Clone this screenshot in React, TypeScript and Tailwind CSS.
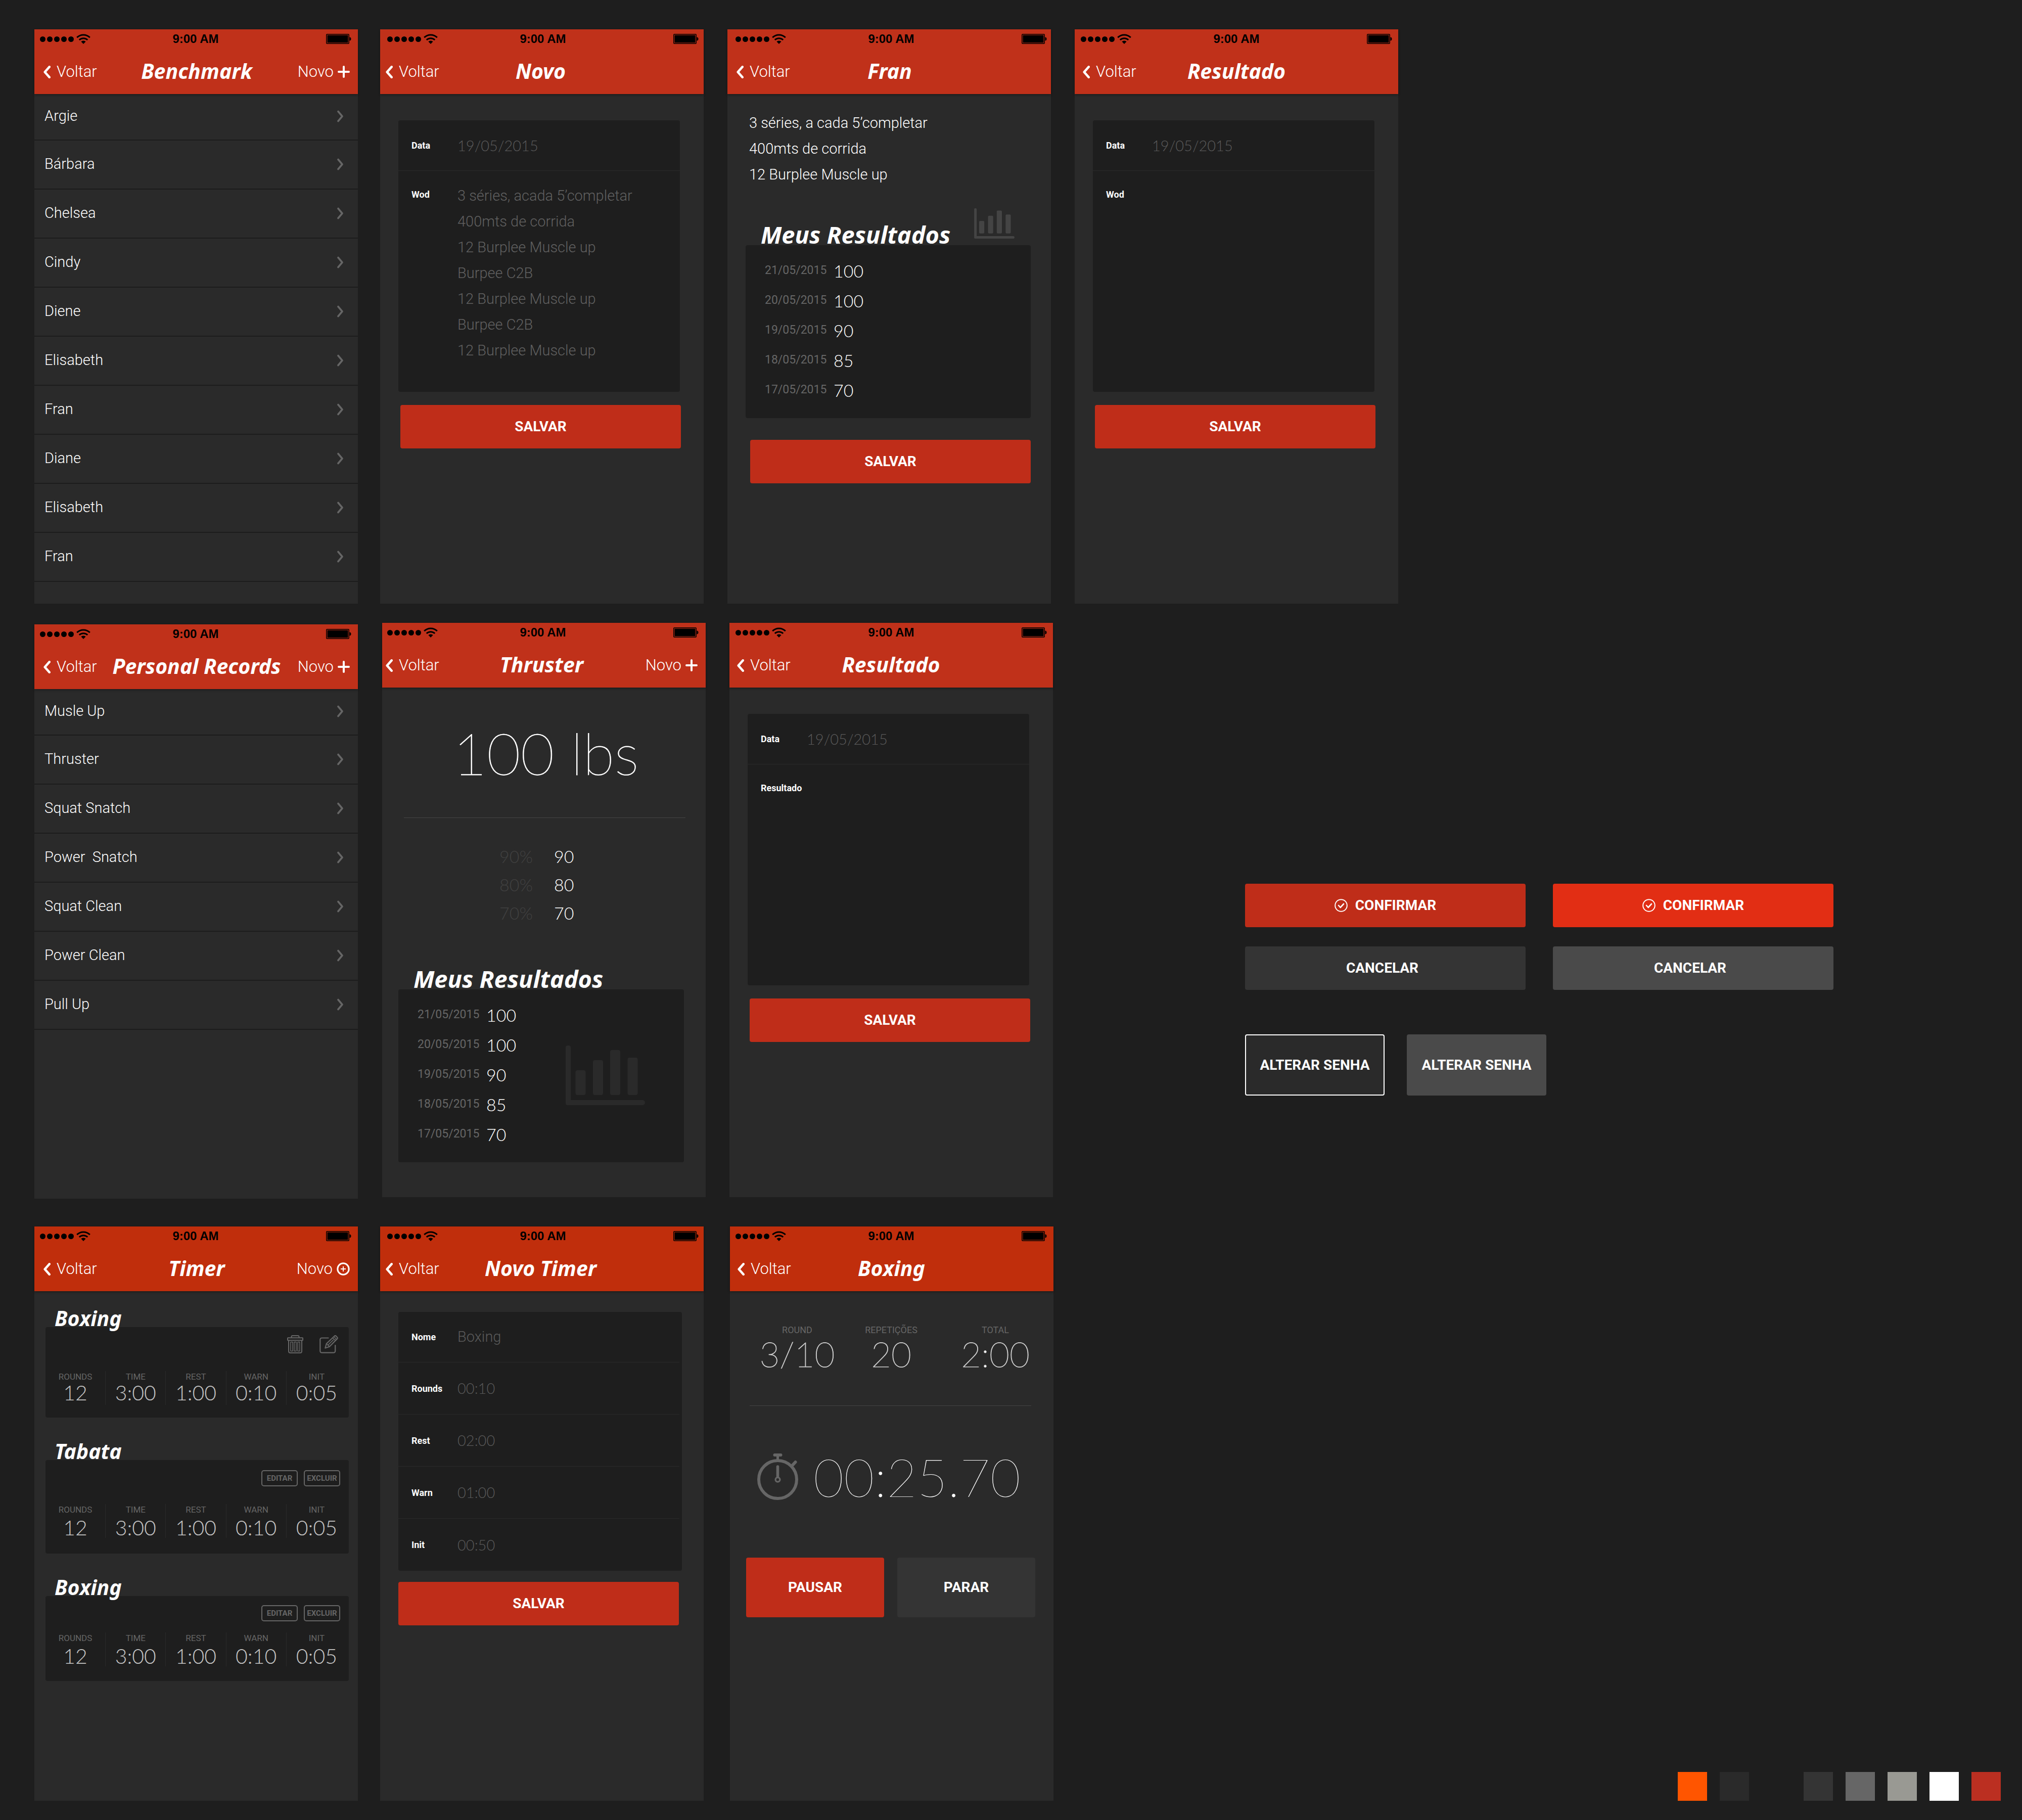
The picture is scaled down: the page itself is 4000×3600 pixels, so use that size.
import type { ReactNode } from "react";

/* ---------- icons ---------- */

function Wifi() {
  return (
    <svg className="h-5 w-7" viewBox="0 0 28 20" fill="none" stroke="#000" strokeWidth="3" aria-hidden="true">
      <path d="M1.2 7.2a18.4 18.4 0 0 1 25.6 0" />
      <path d="M5.8 12a11.8 11.8 0 0 1 16.4 0" />
      <path d="M14 20l-4.6-4.7a6.6 6.6 0 0 1 9.2 0z" fill="#000" stroke="none" />
    </svg>
  );
}

function Battery() {
  return (
    <svg className="h-5 w-[50px]" viewBox="0 0 50 20" aria-hidden="true">
      <rect x="0.75" y="0.75" width="44.5" height="18.5" rx="1.5" fill="none" stroke="#000" strokeWidth="1.5" />
      <rect x="2.5" y="2.5" width="41" height="15" rx="0.5" />
      <path d="M46.5 6.5c4 0 4 7 0 7z" />
    </svg>
  );
}

function BackChevron() {
  return (
    <svg className="h-[25px] w-[14px]" viewBox="0 0 14 25" fill="none" stroke="#fff" strokeWidth="4.6" strokeLinecap="round" strokeLinejoin="round" aria-hidden="true">
      <path d="M11.700 2.300L2.700 12.500l9 10.200" />
    </svg>
  );
}

function RowChevron() {
  return (
    <svg className="h-6 w-3" viewBox="0 0 12 24" fill="none" stroke="#666" strokeWidth="3.6" strokeLinecap="round" strokeLinejoin="round" aria-hidden="true">
      <path d="M2 2.500L10 12l-8 9.500" />
    </svg>
  );
}

function Plus() {
  return (
    <svg className="size-6" viewBox="0 0 24 24" stroke="#fff" strokeWidth="4" strokeLinecap="round" aria-hidden="true">
      <path d="M12 2v20M2 12h20" />
    </svg>
  );
}

function CirclePlus() {
  return (
    <svg className="size-[26px]" viewBox="0 0 26 26" fill="none" stroke="#fff" aria-hidden="true">
      <circle cx="13" cy="13" r="11.2" strokeWidth="3" />
      <path d="M13 8v10M8 13h10" strokeWidth="2" />
    </svg>
  );
}

function Check() {
  return (
    <svg className="size-[26px]" viewBox="0 0 26 26" fill="none" stroke="#fff" aria-hidden="true">
      <circle cx="13" cy="13" r="11.8" strokeWidth="2" />
      <path d="M8 13l3.6 4L18 10" strokeWidth="2.6" strokeLinecap="round" strokeLinejoin="round" />
    </svg>
  );
}

function Bars({ className }: { className: string }) {
  return (
    <svg className={`shrink-0 ${className}`} viewBox="0 0 157 118" fill="currentColor" aria-hidden="true">
      <path d="M0 4a4 4 0 0 1 4-4h2a4 4 0 0 1 4 4v104h142a5 5 0 0 1 0 10H4a4 4 0 0 1-4-4z" />
      <rect x="19.5" y="49" width="20" height="49" rx="4" />
      <rect x="54" y="29" width="20" height="69" rx="4" />
      <rect x="88" y="9" width="20" height="89" rx="4" />
      <rect x="122.5" y="24" width="20" height="74" rx="4" />
    </svg>
  );
}

function Trash() {
  return (
    <svg className="h-9 w-8" viewBox="0 0 32 36" fill="none" stroke="#666" strokeWidth="2" strokeLinejoin="round" aria-hidden="true">
      <path d="M8.500 5V3.200C8.500 2 9.400 1 10.700 1h10.600c1.300 0 2.200 1 2.200 2.200V5" />
      <rect x="1" y="5.200" width="30" height="5" rx="0.600" />
      <path d="M3 10.200v21.300c0 2 1.300 3.500 3.300 3.500h19.400c2 0 3.300-1.500 3.300-3.500V10.200" />
      <path d="M7 13.500h4v18H7zM14 13.500h4v18h-4zM21 13.500h4v18h-4z" strokeWidth="1.500" />
    </svg>
  );
}

function Edit() {
  return (
    <svg className="h-9 w-[37px]" viewBox="0 0 37 36" fill="none" stroke="#666" strokeWidth="2.200" strokeLinecap="round" strokeLinejoin="round" aria-hidden="true">
      <path d="M17.500 5.500H5C2.800 5.500 1.300 7 1.300 9v22c0 2.200 1.500 3.700 3.700 3.700h22.500c2.200 0 3.700-1.500 3.700-3.700V20" />
      <path d="M11.300 25.500l2.500-8.700L29.700 1.700c1-1 2.200-.9 3 0l2.400 2.500c.9.900.9 2 0 2.900L19.700 22.700z" />
      <path d="M13.800 16.800l5.900 5.900M26 5.300l5.800 5.400M28.500 3l5.500 5.300M16.800 19.700l10.500-10.300" strokeWidth="1.700" />
    </svg>
  );
}

function Stopwatch() {
  return (
    <svg className="h-[92px] w-[81px]" viewBox="0 0 81 92" fill="none" stroke="#666" strokeLinecap="round" aria-hidden="true">
      <circle cx="40.500" cy="51.500" r="37.500" strokeWidth="6" />
      <path d="M34.500 3h12M69.500 23.500l6-6.500" strokeWidth="6" />
      <path d="M40.500 4v9" strokeWidth="5" />
      <path d="M40.500 26v20" strokeWidth="5.600" />
      <circle cx="40.500" cy="51.700" r="4.400" strokeWidth="3.300" />
    </svg>
  );
}

/* ---------- shared parts ---------- */

type BoardProps = {
  title: string;
  bar: string;
  back: string;
  action?: ReactNode;
  tone?: string;
  className?: string;
  children: ReactNode;
};

function Board({ title, bar, back, action, tone = "bg-[#c0311a]", className = "", children }: BoardProps) {
  return (
    <section className={`min-h-[1136px] w-[16vw] min-w-[640px] shrink-0 bg-[#2a2a2a] ${className}`}>
      <header className={`flex h-32 flex-col shadow-[0_2px_4px_rgba(0,0,0,0.35)] ${tone}`}>
        <div className={`grid h-[38px] grid-cols-[1fr_auto_1fr] items-center ${bar}`}>
          <div className="flex items-center gap-[3px]">
            {[0, 1, 2, 3, 4].map((n) => (
              <span key={n} className="size-[11px] rounded-full bg-black" />
            ))}
            <span className="ml-0.5">
              <Wifi />
            </span>
          </div>
          <span className="font-['Liberation_Sans',sans-serif] text-[24px] leading-6 font-bold text-black">9:00 AM</span>
          <span className="justify-self-end">
            <Battery />
          </span>
        </div>
        <nav className={`grid grow grid-cols-[1fr_auto_1fr] items-center pt-0.5 pr-4 ${back}`}>
          <a href="#voltar" className="flex items-center gap-3 text-[31px] font-light">
            <BackChevron />
            Voltar
          </a>
          <h1 className="pb-1 font-['Noto_Sans',sans-serif] text-[41px] leading-none font-bold italic">{title}</h1>
          <div className="justify-self-end">{action}</div>
        </nav>
      </header>
      {children}
    </section>
  );
}

function NewLink({ circle = false }: { circle?: boolean }) {
  return (
    <a href="#novo" className="flex items-center gap-2 text-[31px] font-light">
      Novo
      {circle ? <CirclePlus /> : <Plus />}
    </a>
  );
}

function NameList({ names }: { names: string[] }) {
  return (
    <ul>
      {names.map((name, i) => (
        <li key={i} className="h-[97px] border-b-2 border-[#1c1c1c] first:h-[92px]">
          <a href={`#item-${i}`} className="flex h-full items-center justify-between pr-[29px] pb-0.5 pl-5 text-[29px] font-light whitespace-pre">
            {name}
            <RowChevron />
          </a>
        </li>
      ))}
    </ul>
  );
}

function SolidButton({ children, className }: { children: ReactNode; className: string }) {
  return (
    <button type="button" className={`flex items-center justify-center gap-[15px] rounded-[4px] text-[28px] leading-8 font-bold ${className}`}>
      {children}
    </button>
  );
}

function Field({ id, label, value, className = "h-[103px]", text = false }: { id: string; label: string; value: string; className?: string; text?: boolean }) {
  return (
    <div className={`flex items-center border-b border-[#2a2a2a] pl-[26px] last:border-b-0 ${className}`}>
      <label htmlFor={id} className="w-[91px] shrink-0 text-[18px] font-bold">
        {label}
      </label>
      <input
        id={id}
        defaultValue={value}
        className={`min-w-0 grow bg-transparent text-[29px] font-light text-[#5a5a5a] outline-none ${text ? "" : "font-['Lato',sans-serif]"}`}
      />
    </div>
  );
}

function NoteForm({ id, label, note = "" }: { id: string; label: string; note?: string }) {
  return (
    <form className="pt-[52px] pr-[47px] pl-9">
      <div className="rounded-[4px] bg-[#1e1e1e]">
        <Field id={`${id}-data`} label="Data" value="19/05/2015" className="h-[100px] last:border-b" />
        <div className="flex h-[437px] pl-[26px]">
          <label htmlFor={`${id}-note`} className="w-[91px] shrink-0 pt-[35px] text-[18px] leading-6 font-bold">
            {label}
          </label>
          <textarea
            id={`${id}-note`}
            defaultValue={note}
            className="min-w-0 grow resize-none bg-transparent pt-6 text-[29px] leading-[51px] font-light text-[#606060] outline-none"
          />
        </div>
      </div>
      <SolidButton className="mt-[26px] ml-1 h-[86px] w-[calc(100%-2px)] bg-[#bf2d19]">SALVAR</SolidButton>
    </form>
  );
}

const results = [
  ["21/05/2015", "100"],
  ["20/05/2015", "100"],
  ["19/05/2015", "90"],
  ["18/05/2015", "85"],
  ["17/05/2015", "70"],
];

function Results({ children }: { children?: ReactNode }) {
  return (
    <div className="flex min-h-[342px] items-start rounded-[4px] bg-[#1e1e1e] pt-[21px] pl-[38px]">
      <table>
        <tbody>
          {results.map(([date, value]) => (
            <tr key={date} className="h-[59px]">
              <th scope="row" className="w-[136px] text-left text-[23px] font-normal text-[#666]">
                {date}
              </th>
              <td className="font-['Lato',sans-serif] text-[34px] leading-none font-light">{value}</td>
            </tr>
          ))}
        </tbody>
      </table>
      {children}
    </div>
  );
}

const heading = "font-['Noto_Sans',sans-serif] text-[47px] leading-[48px] font-bold italic";

/* ---------- timer parts ---------- */

const timerStats = [
  ["ROUNDS", "12"],
  ["TIME", "3:00"],
  ["REST", "1:00"],
  ["WARN", "0:10"],
  ["INIT", "0:05"],
];

function TimerCard({ name, top, card, value, children }: { name: string; top: string; card: string; value: string; children: ReactNode }) {
  return (
    <article>
      <h2 className="-mb-0.5 pl-[18px] font-['Noto_Sans',sans-serif] text-[41px] leading-10 font-bold italic">{name}</h2>
      <div className={`rounded-[4px] bg-[#1e1e1e] ${card}`}>
        <div className={`flex items-start justify-end ${top}`}>{children}</div>
        <dl className="mr-1 grid grid-cols-5 text-center">
          {timerStats.map(([label, v]) => (
            <div key={label} className="h-[67px] border-r border-[#2a2a2a] last:border-r-0">
              <dt className="text-[17px] leading-[22px] text-[#666]">{label}</dt>
              <dd className={`font-['Lato',sans-serif] text-[41px] font-light text-[#c4c4c4] ${value}`}>{v}</dd>
            </div>
          ))}
        </dl>
      </div>
    </article>
  );
}

function TextActions() {
  return (
    <>
      {["EDITAR", "EXCLUIR"].map((label) => (
        <button key={label} type="button" className="h-8 w-[72px] rounded-[5px] border-2 border-[#666] text-[15px] leading-none font-bold text-[#666]">
          {label}
        </button>
      ))}
    </>
  );
}

/* ---------- page ---------- */

const benchmarks = ["Argie", "Bárbara", "Chelsea", "Cindy", "Diene", "Elisabeth", "Fran", "Diane", "Elisabeth", "Fran"];
const records = ["Musle Up", "Thruster", "Squat Snatch", "Power  Snatch", "Squat Clean", "Power Clean", "Pull Up"];
const wod = [
  "3 séries, acada 5’completar",
  "400mts de corrida",
  "12 Burplee Muscle up",
  "Burpee C2B",
  "12 Burplee Muscle up",
  "Burpee C2B",
  "12 Burplee Muscle up",
].join("\n");

const timerFields = [
  ["Nome", "Boxing"],
  ["Rounds", "00:10"],
  ["Rest", "02:00"],
  ["Warn", "01:00"],
  ["Init", "00:50"],
];

const percentages = [
  ["90%", "90"],
  ["80%", "80"],
  ["70%", "70"],
];

const swatches = ["bg-[#ff5500]", "bg-[#2a2a2a]", "bg-[#1e1e1e]", "bg-[#343434]", "bg-[#666666]", "bg-[#999993]", "bg-white", "bg-[#bb2f21]"];

const timerTone = "bg-[#c02e0c]";

export default function App() {
  return (
    <main className="flex min-h-screen flex-col bg-[#1e1e1e] pt-[58px] pb-[38px] pl-[68px] font-['Roboto',sans-serif] text-white">
      <div className="flex items-start">
        <Board title="Benchmark" bar="pl-[11px] pr-[13px]" back="pl-[18px]" action={<NewLink />}>
          <NameList names={benchmarks} />
        </Board>
        <Board title="Novo" bar="pl-[14px] pr-2.5" back="pl-[11px]" className="ml-11">
          <NoteForm id="novo" label="Wod" note={wod} />
        </Board>
        <Board title="Fran" bar="pl-4 pr-2" back="pl-[18px]" className="ml-[47px]">
          <div className="pt-8 pr-10 pl-9">
            <p className="pl-[7px] text-[29px] leading-[51px] font-light">
              3 séries, a cada 5’completar
              <br />
              400mts de corrida
              <br />
              12 Burplee Muscle up
            </p>
            <div className="mt-[41px] flex items-end justify-between pr-8 pl-[30px]">
              <h2 className={`-mb-[3px] ${heading}`}>Meus Resultados</h2>
              <Bars className="mb-[13px] h-[60px] w-20 text-[#444]" />
            </div>
            <Results />
            <SolidButton className="mt-[43px] ml-[9px] h-[86px] w-[calc(100%-9px)] bg-[#bf2d19]">SALVAR</SolidButton>
          </div>
        </Board>
        <Board title="Resultado" bar="pl-3 pr-3" back="pl-[16px]" className="ml-[47px]">
          <NoteForm id="resultado-wod" label="Wod" />
        </Board>
      </div>

      <div className="mt-[38px] flex items-start">
        <Board title="Personal Records" bar="pl-[11px] pr-[13px]" back="pl-[18px]" action={<NewLink />} className="mt-[3px]">
          <NameList names={records} />
        </Board>
        <Board title="Thruster" bar="pl-2.5 pr-[14px]" back="pl-[7px]" action={<NewLink />} className="ml-12">
          <p className="pt-[68px] pl-2 text-center font-['Lato',sans-serif] text-[115px] leading-[120px] font-thin [-webkit-text-stroke:1px_white]">100 lbs</p>
          <hr className="mt-[69px] mr-10 ml-[43px] border-[#444]" />
          <table className="mt-12 ml-[232px] font-['Lato',sans-serif] text-[34px] leading-none">
            <tbody>
              {percentages.map(([pct, value]) => (
                <tr key={pct} className="h-14">
                  <th scope="row" className="w-[108px] text-left font-light text-[#414141]">
                    {pct}
                  </th>
                  <td className="font-light">{value}</td>
                </tr>
              ))}
            </tbody>
          </table>
          <div className="pt-[78px] pr-[43px] pl-8">
            <h2 className={`-mb-[3px] pl-[30px] ${heading}`}>Meus Resultados</h2>
            <Results>
              <Bars className="mt-[90px] ml-[98px] h-[118px] w-[157px] text-[#2a2a2a]" />
            </Results>
          </div>
        </Board>
        <Board title="Resultado" bar="pl-3 pr-3" back="pl-[15px]" className="ml-[47px]">
          <NoteForm id="resultado" label="Resultado" />
        </Board>

        <section aria-label="Botões" className="mt-[516px] ml-[380px] w-[29.1vw] min-w-[1100px]">
          <div className="grid grid-cols-2 gap-x-[54px] gap-y-[38px]">
            <SolidButton className="h-[86px] bg-[#bf2d19]">
              <Check />
              CONFIRMAR
            </SolidButton>
            <SolidButton className="h-[86px] bg-[#e22e14]">
              <Check />
              CONFIRMAR
            </SolidButton>
            <SolidButton className="h-[86px] bg-[#343434] pr-3">CANCELAR</SolidButton>
            <SolidButton className="h-[86px] bg-[#4a4a4a] pr-3">CANCELAR</SolidButton>
          </div>
          <div className="mt-[88px] flex gap-11">
            <SolidButton className="h-[121px] w-[276px] border-2 border-white bg-[#2a2a2a]">ALTERAR SENHA</SolidButton>
            <SolidButton className="h-[121px] w-[276px] bg-[#4a4a4a]">ALTERAR SENHA</SolidButton>
          </div>
        </section>
      </div>

      <div className="mt-[55px] flex items-start">
        <Board title="Timer" tone={timerTone} bar="pl-[11px] pr-[13px]" back="pl-[18px]" action={<NewLink circle />}>
          <div className="space-y-[46px] pt-[33px] pr-[18px] pl-[22px]">
            <TimerCard name="Boxing" top="h-[87px] gap-8 pt-4 pr-[21px]" card="h-[179px]" value="leading-[42px]">
              <button type="button" aria-label="Excluir">
                <Trash />
              </button>
              <button type="button" aria-label="Editar">
                <Edit />
              </button>
            </TimerCard>
            <TimerCard name="Tabata" top="h-[87px] gap-3 pt-5 pr-[17px]" card="h-[185px]" value="leading-[50px]">
              <TextActions />
            </TimerCard>
            <TimerCard name="Boxing" top="h-[72px] gap-3 pt-[18px] pr-[17px]" card="h-[168px]" value="leading-[50px]">
              <TextActions />
            </TimerCard>
          </div>
        </Board>
        <Board title="Novo Timer" tone={timerTone} bar="pl-[14px] pr-2.5" back="pl-[11px]" className="ml-11">
          <form className="pt-[41px] pr-[43px] pl-9">
            <div className="rounded-[4px] bg-[#1e1e1e] pr-[5px]">
              {timerFields.map(([label, value]) => (
                <Field key={label} id={`timer-${label}`} label={label} value={value} text={label === "Nome"} className="h-[103px] first:h-[100px]" />
              ))}
            </div>
            <SolidButton className="mt-[22px] h-[86px] w-[calc(100%-6px)] bg-[#bf2d19]">SALVAR</SolidButton>
          </form>
        </Board>
        <Board title="Boxing" tone={timerTone} bar="pl-[11px] pr-[13px]" back="pl-[15px]" className="ml-[52px]">
          <dl className="ml-10 grid grid-cols-[186fr_186fr_226fr] pt-[65px] pr-0.5 text-center">
            {[
              ["ROUND", "3/10"],
              ["REPETIÇÕES", "20"],
              ["TOTAL", "2:00"],
            ].map(([label, value]) => (
              <div key={label}>
                <dt className="text-[18px] leading-6 text-[#666]">{label}</dt>
                <dd className="font-['Lato',sans-serif] text-[69px] leading-[70px] font-thin [-webkit-text-stroke:1px_#ccc]">{value}</dd>
              </div>
            ))}
          </dl>
          <hr className="mt-[67px] mr-11 ml-[39px] border-[#444]" />
          <div className="mt-[88px] flex items-center gap-[30px] pl-[54px]">
            <Stopwatch />
            <time className="font-['Lato',sans-serif] text-[104px] leading-none font-thin">00:25.70</time>
          </div>
          <div className="mt-[108px] flex gap-[26px] pr-9 pl-8">
            <SolidButton className="h-[118px] flex-1 bg-[#bf2d19]">PAUSAR</SolidButton>
            <SolidButton className="h-[118px] flex-1 bg-[#343434]">PARAR</SolidButton>
          </div>
        </Board>
        <ul aria-label="Paleta" className="mr-[42px] ml-auto flex gap-[25px] self-end">
          {swatches.map((color) => (
            <li key={color} className={`h-[57px] w-[58px] ${color}`} />
          ))}
        </ul>
      </div>
    </main>
  );
}
